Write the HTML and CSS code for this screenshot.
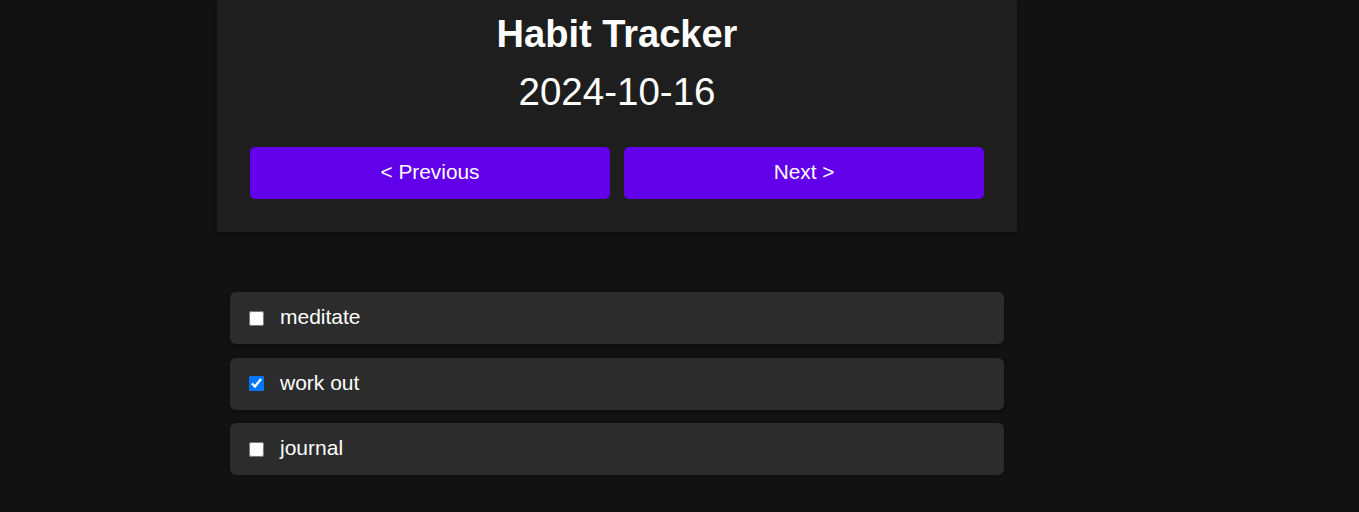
FILE: index.html
```html
<!DOCTYPE html>
<html lang="en">
<head>
<meta charset="utf-8">
<title>Habit Tracker</title>
<link rel="stylesheet" href="styles.css">
</head>
<body>
<div class="app">
  <header class="header">
    <h1 class="title">Habit Tracker</h1>
    <div class="date">2024-10-16</div>
    <nav class="nav">
      <button class="nav-btn">&lt; Previous</button>
      <button class="nav-btn">Next &gt;</button>
    </nav>
  </header>
  <ul class="habits">
    <li class="habit"><input type="checkbox" class="check"><span class="label">meditate</span></li>
    <li class="habit"><input type="checkbox" class="check" checked><span class="label">work out</span></li>
    <li class="habit"><input type="checkbox" class="check"><span class="label">journal</span></li>
  </ul>
</div>
</body>
</html>
```
FILE: styles.css
```css
html, body {
  margin: 0;
  padding: 0;
  background: #121212;
  color: #ffffff;
  font-family: "Liberation Sans", Arial, sans-serif;
}

.app {
  width: 800px;
  margin: 0 auto 0 217px;
}

.header {
  background: #1e1e1e;
  padding: 13px 33px 33px;
  text-align: center;
  box-shadow: 0 2px 4px rgba(0, 0, 0, 0.25);
}

.title {
  margin: 0;
  font-size: 38px;
  font-weight: bold;
  line-height: 43px;
}

.date {
  margin: 14px 0 33px;
  font-size: 38.5px;
  line-height: 44px;
}

.nav {
  display: flex;
  gap: 14px;
}

.nav-btn {
  flex: 1;
  height: 52px;
  border: none;
  border-radius: 5px;
  background: #6200ea;
  color: #ffffff;
  font-family: "Liberation Sans", Arial, sans-serif;
  font-size: 20.8px;
  padding: 0 0 2px;
  cursor: pointer;
}

.habits {
  list-style: none;
  margin: 60px 13px 0;
  padding: 0;
  display: flex;
  flex-direction: column;
  gap: 13.5px;
}

.habit {
  height: 52px;
  box-sizing: border-box;
  display: flex;
  align-items: center;
  background: #2c2c2c;
  border-radius: 6px;
  box-shadow: 0 2px 4px rgba(0, 0, 0, 0.3);
  padding: 0 19px;
}

.check {
  width: 15px;
  height: 15px;
  margin: 0 16px 0 0;
}

.label {
  font-size: 21px;
  position: relative;
  top: -1px;
}
```
